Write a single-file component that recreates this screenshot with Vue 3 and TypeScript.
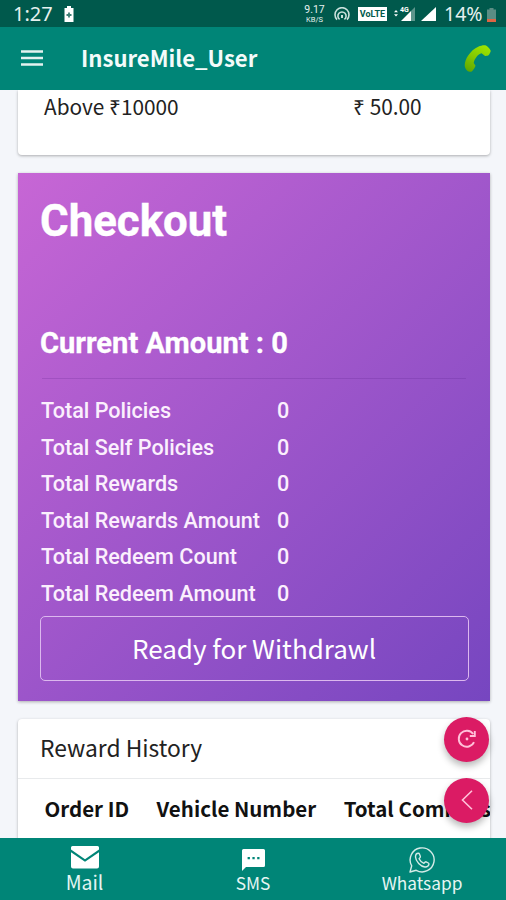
<script setup lang="ts">
interface Total {
  label: string
  value: number
}

const totals: Total[] = [
  { label: 'Total Policies', value: 0 },
  { label: 'Total Self Policies', value: 0 },
  { label: 'Total Rewards', value: 0 },
  { label: 'Total Rewards Amount', value: 0 },
  { label: 'Total Redeem Count', value: 0 },
  { label: 'Total Redeem Amount', value: 0 },
]

const columns: string[] = ['Order ID', 'Vehicle Number', 'Total Commission']
</script>

<template>
  <div class="screen">
    <div class="status">
      <span class="clock">1:27</span>
      <svg class="saver" width="10" height="16" viewBox="0 0 10 16">
        <path d="M3 0h4v2h2.500v14h-9V2H3z" fill="#fff" />
        <path d="M5 6.500v5M2.500 9h5" stroke="#3d7f75" stroke-width="1.800" />
      </svg>
      <div class="rate"><span>9.17</span><span class="unit">KB/S</span></div>
      <svg class="hotspot" width="16" height="14" viewBox="0 0 16 14" fill="none" stroke="#c9e0dc" stroke-width="1.600">
        <path d="M3 12.600A7 7 0 1 1 13 12.600" />
        <path d="M5.600 12.400A4.100 4.100 0 1 1 10.400 12.400" />
        <path d="M8 8v3" stroke-width="2" />
      </svg>
      <span class="volte">VoLTE</span>
      <svg class="signal-a" width="22" height="15" viewBox="0 0 22 15">
        <path d="M0 6.300 2 4l2 2.300zM0 8.200h4L2 10.500z" fill="#fff" />
        <path d="M7 15 17 5v10z" fill="#fff" />
        <path d="M17 5l4-4v14h-4z" fill="#5d958c" />
        <text x="6" y="6" class="net">4G</text>
      </svg>
      <svg class="signal-b" width="15" height="14" viewBox="0 0 15 14"><path d="M0 14 15 0v14z" fill="#fff" /></svg>
      <span class="percent">14%</span>
      <svg class="battery" width="9" height="14" viewBox="0 0 9 14">
        <path d="M2.500 0h4v1.500H9V14H0V1.500h2.500z" fill="#5b8d84" />
        <path d="M0 11h9v3H0z" fill="#dd6544" />
      </svg>
    </div>

    <header class="bar">
      <svg class="menu" width="22" height="16" viewBox="0 0 22 16">
        <path d="M0 1.500h22M0 8h22M0 14.500h22" stroke="#e3f2f0" stroke-width="2.500" />
      </svg>
      <h1>InsureMile_User</h1>
      <svg class="phone" width="28" height="28" viewBox="0 0 28 28">
        <defs>
          <linearGradient id="leaf" x1="0.200" y1="1" x2="0.700" y2="0">
            <stop offset="0" stop-color="#5fa800" />
            <stop offset="0.500" stop-color="#84c800" />
            <stop offset="1" stop-color="#9be400" />
          </linearGradient>
        </defs>
        <path fill="url(#leaf)" d="M14.700 1.500C17 .4 20.500-.3 22 .6c2 1.200 3.600 3 4.600 5 .4.800-1 3.500-1.900 4.400-.8.800-3 1.200-4 .7L17.600 8.200C15.500 8.700 14.200 9.700 13 11.300c-1.800 2.200-3 4.300-3.300 6.700l1.700 2.600c.4.700-2.700 5.400-4 6.100-.8.500-3.200-.2-4.100-1C2 24.500.8 22.500.7 20.700.8 17 2 13.500 4 10.700 6.800 6.800 10 3.400 14.700 1.500z" />
      </svg>
    </header>

    <main class="content">
      <section class="card slab">
        <span>Above ₹10000</span>
        <span>₹ 50.00</span>
      </section>

      <section class="checkout">
        <h2>Checkout</h2>
        <h3>Current Amount : 0</h3>
        <hr />
        <div v-for="t in totals" :key="t.label" class="total">
          <span>{{ t.label }}</span><span>{{ t.value }}</span>
        </div>
        <button type="button">Ready for Withdrawl</button>
      </section>

      <section class="card history">
        <h4>Reward History</h4>
        <div class="columns">
          <span v-for="c in columns" :key="c">{{ c }}</span>
        </div>
      </section>
    </main>

    <nav class="tabs">
      <div class="tab mail">
        <svg width="28" height="23" viewBox="0 0 28 23" fill="#fff">
          <path d="M1.500 0h25A1.500 1.500 0 0 1 28 1.500v2L14 13.200 0 3.500v-2A1.500 1.500 0 0 1 1.500 0z" />
          <path d="M0 6.300l14 9.400 14-9.400v14.200a2 2 0 0 1-2 2H2a2 2 0 0 1-2-2z" />
        </svg>
        <span>Mail</span>
      </div>
      <div class="tab sms">
        <svg width="23" height="22" viewBox="0 0 23 22">
          <path d="M1.500 0h20A1.500 1.500 0 0 1 23 1.500v15a1.500 1.500 0 0 1-1.500 1.500H4l-4 4V1.500A1.500 1.500 0 0 1 1.500 0z" fill="#fff" />
          <path d="M5.600 8h2.300v2.300H5.600zM10.400 8h2.300v2.300h-2.300zM15.200 8h2.300v2.300h-2.300z" fill="#008577" />
        </svg>
        <span>SMS</span>
      </div>
      <div class="tab whatsapp">
        <svg width="26" height="26" viewBox="0 0 26 26" fill="none" stroke="#d5ebe8" stroke-width="1.400" stroke-linejoin="round">
          <path d="M1 25l1.700-6.200A12 12 0 1 1 7.200 23.300z" />
          <path d="M9.300 6.300c.6 0 .9.200 1.100.7l1 2.400c.2.500 0 .9-1.300 2.300 1 2.300 2.600 3.700 4.800 4.600 1.300-1.600 1.600-1.700 2.200-1.500l2.300 1.200c.6.300.7.700.5 1.400-.5 2-2.400 2.700-4 2.600C11.700 19.600 6.700 14.300 6.500 10c0-1.700 1-3.700 2.800-3.700z" />
        </svg>
        <span>Whatsapp</span>
      </div>
    </nav>

    <div class="fabs">
      <div class="fab">
        <svg width="20" height="20" viewBox="0 0 20 20" fill="none" stroke="#ffc1d9" stroke-width="1.900">
          <path d="M17 13.200A8 8 0 1 1 16.200 5" />
          <path d="M17.800 2v5h-5" />
          <circle cx="10" cy="10" r="1.400" fill="#ffc1d9" stroke="none" />
        </svg>
      </div>
      <div class="fab">
        <svg width="12" height="20" viewBox="0 0 12 20" fill="none" stroke="#ffc1d9" stroke-width="1.600">
          <path d="M11 .8 1.500 10l9.500 9.200" />
        </svg>
      </div>
    </div>
  </div>
</template>

<style>
body {
  margin: 0;
  overflow: hidden;
}
</style>

<style scoped>
.screen {
  position: relative;
  display: flex;
  flex-direction: column;
  width: 506px;
  height: 900px;
  overflow: hidden;
  background: #f4f6fa;
  color: #222;
  font-family: "Noto Sans CJK SC", "Open Sans", sans-serif;
  white-space: nowrap;
}
h1, h2, h3, h4 {
  margin: 0;
}
svg {
  display: block;
  flex: none;
}
.status {
  display: flex;
  align-items: center;
  flex: none;
  box-sizing: border-box;
  height: 27px;
  padding: 0 10px 0 13px;
  background: #00594c;
  color: #e6f1ef;
  font-family: Roboto, sans-serif;
}
.clock {
  width: 40px;
  font-family: "Noto Sans", sans-serif;
  font-size: 20px;
  line-height: 27px;
}
.saver {
  margin: 1px auto 0 11px;
}
.rate {
  display: flex;
  flex-direction: column;
  align-items: center;
  width: 21px;
  margin-right: 9px;
  font-size: 10.500px;
  line-height: 11px;
}
.unit {
  font-size: 7.500px;
  line-height: 9px;
}
.hotspot {
  margin-right: 8px;
}
.volte {
  box-sizing: border-box;
  width: 29px;
  height: 14px;
  margin: 1px 7px 0 0;
  background: #fff;
  color: #00594c;
  font-size: 9px;
  font-weight: 700;
  line-height: 14px;
  text-align: center;
}
.net {
  fill: #fff;
  font-size: 7px;
  font-weight: 700;
}
.signal-a {
  margin-right: 5px;
}
.signal-b {
  margin: 1px 8px 0 0;
}
.percent {
  width: 39px;
  font-family: "Noto Sans", sans-serif;
  font-size: 19.500px;
  line-height: 27px;
}
.battery {
  margin: 2px 0 0 4px;
}
.bar {
  display: flex;
  align-items: center;
  flex: none;
  box-sizing: border-box;
  height: 63px;
  padding: 0 14px 0 21px;
  background: #008577;
  color: #f3fbfa;
}
.bar h1 {
  flex: 1;
  margin: -3px 0 0 38px;
  font-size: 22.100px;
  font-weight: 700;
  line-height: 30px;
}
.menu {
  margin-top: -1px;
}
.content {
  display: flex;
  flex-direction: column;
  gap: 18px;
  flex: none;
  box-sizing: border-box;
  height: 747.500px;
  padding: 0 16px 0 18px;
  overflow: hidden;
}
.card {
  flex: none;
  border-radius: 4px;
  background: #fff;
  box-shadow: 0 1px 3px rgba(0, 0, 0, 0.3);
}
.slab {
  display: grid;
  grid-template-columns: 309px 1fr;
  box-sizing: border-box;
  height: 65px;
  padding: 1px 0 0 26px;
  border-radius: 0 0 4px 4px;
  font-size: 20.800px;
  line-height: 30px;
}
.checkout {
  flex: none;
  box-sizing: border-box;
  height: 528px;
  padding: 0 22px;
  background: linear-gradient(135deg, #c766d5 0%, #7646c0 100%);
  box-shadow: 0 1px 3px rgba(0, 0, 0, 0.3);
  color: #fff;
  font-family: Roboto, sans-serif;
}
.checkout h2 {
  padding-top: 23px;
  font-size: 43.800px;
  font-weight: 700;
  line-height: 50px;
  -webkit-text-stroke: 0.400px #fff;
}
.checkout h3 {
  padding-top: 79px;
  font-size: 29.100px;
  font-weight: 700;
  line-height: 36px;
  -webkit-text-stroke: 0.300px #fff;
}
hr {
  height: 1px;
  margin: 17px 2px 14px;
  border: 0;
  background: rgba(80, 20, 130, 0.18);
}
.total {
  display: grid;
  grid-template-columns: 236px 1fr;
  padding-left: 1px;
  color: #fbeffd;
  font-size: 21.600px;
  font-weight: 500;
  line-height: 36.600px;
}
button {
  display: block;
  box-sizing: border-box;
  width: 429px;
  height: 65px;
  margin: 3px 0 0 -0.500px;
  padding: 0;
  border: 1.500px solid #dcb8ee;
  border-radius: 5px;
  background: none;
  color: #fff;
  font: 400 26px/60px "Noto Sans CJK SC", sans-serif;
}
.history {
  height: 140px;
  overflow: hidden;
}
.history h4 {
  height: 59px;
  padding-left: 22px;
  border-bottom: 1px solid #e8eaec;
  font-size: 22.800px;
  font-weight: 400;
  line-height: 57px;
}
.columns {
  display: flex;
  gap: 27.500px;
  padding-left: 26.500px;
  color: #111;
  font-size: 20.500px;
  font-weight: 700;
  line-height: 58px;
}
.tabs {
  display: grid;
  grid-template-columns: 169px 168px 169px;
  flex: none;
  height: 63px;
  background: #008577;
  color: #e6f5f3;
}
.tab {
  display: flex;
  flex-direction: column;
  align-items: center;
  font-size: 17.300px;
  line-height: 22px;
}
.mail svg {
  margin-top: 8.500px;
}
.mail span {
  margin-top: 1.500px;
  font-size: 19.500px;
}
.sms svg {
  margin-top: 11.500px;
}
.sms span {
  margin-top: 0.500px;
  font-size: 17.300px;
}
.whatsapp svg {
  margin-top: 9.500px;
}
.whatsapp span {
  margin: -1.500px 0 0 1px;
}
.fabs {
  position: absolute;
  top: 716.500px;
  left: 444px;
  display: flex;
  flex-direction: column;
  gap: 16px;
}
.fab {
  display: flex;
  align-items: center;
  justify-content: center;
  width: 45px;
  height: 45px;
  border-radius: 50%;
  background: #db1b64;
  box-shadow: 0 4px 7px rgba(0, 0, 0, 0.28);
}
</style>
